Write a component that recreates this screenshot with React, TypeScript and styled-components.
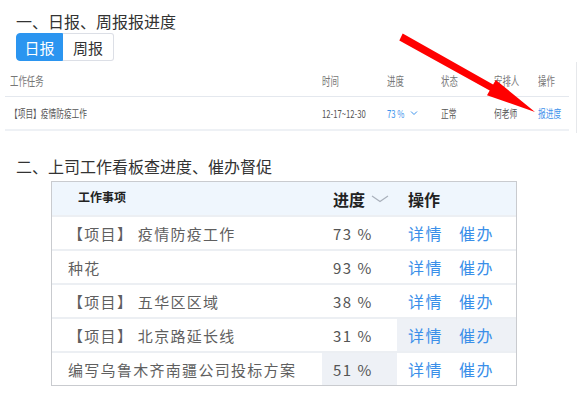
import React from "react";
import styled, { createGlobalStyle } from "styled-components";

const GlobalStyle = createGlobalStyle`
  html, body {
    margin: 0;
    padding: 0;
    background: #fff;
  }
  body {
    font-family: "Noto Sans CJK SC", "Noto Sans", sans-serif;
    color: #333;
  }
`;

const Page = styled.div`
  position: relative;
  width: 581px;
  height: 399px;
  padding-top: 10px;
  box-sizing: border-box;
  overflow: hidden;
`;

const Title = styled.h2<{ $top?: number }>`
  margin: ${(p) => p.$top ?? 0}px 0 0 16px;
  font-size: 16px;
  font-weight: 400;
  line-height: 22px;
  color: #333;
`;

const Tabs = styled.div`
  display: flex;
  margin: 1px 0 0 16px;
`;

const Tab = styled.div<{ $active?: boolean }>`
  height: 28px;
  box-sizing: border-box;
  padding: 0;
  display: flex;
  align-items: center;
  justify-content: center;
  white-space: nowrap;
  font-size: 15px;
  color: ${(p) => (p.$active ? "#fff" : "#333")};
  background: ${(p) => (p.$active ? "#2b95f0" : "#fff")};
  border: 1px solid ${(p) => (p.$active ? "#2b95f0" : "#dcdfe6")};
  border-left-width: ${(p) => (p.$active ? 1 : 0)}px;
  border-radius: ${(p) => (p.$active ? "4px 0 0 4px" : "0 3px 3px 0")};
  width: ${(p) => (p.$active ? 47 : 51)}px;
`;

// 日报表格
const Panel = styled.div`
  margin: 1px 0 0 0;
  padding: 3px 7px 2px 5px;
  width: 577px;
  box-sizing: border-box;
  border-right: 1px solid #e6e8eb;
`;

const ReportRow = styled.div<{ $head?: boolean }>`
  display: grid;
  grid-template-columns: 312px 65px 54px 53px 44px 37px;
  height: ${(p) => (p.$head ? 32 : 34)}px;
  align-items: center;
  border-bottom: ${(p) => (p.$head ? "1px solid #e4e8ee" : "2px solid #eef1f5")};
  box-sizing: border-box;
`;

const ReportCell = styled.div`
  padding-left: 5px;
  display: flex;
  align-items: center;
  white-space: nowrap;
  overflow: visible;
`;

const Squeeze = styled.span<{ $head?: boolean; $blue?: boolean }>`
  display: inline-block;
  font-size: ${(p) => (p.$head ? 12 : 11)}px;
  color: ${(p) => (p.$blue ? "#3d93ec" : p.$head ? "#777" : "#555")};
  transform: scaleX(0.7);
  transform-origin: left center;
  white-space: nowrap;
`;

const TinyChevron = styled.svg`
  margin-left: -2px;
`;

// 看板表格
const Board = styled.div`
  margin: 4px 0 0 51px;
  width: 466px;
  border: 1px solid #c9cbcf;
  box-sizing: border-box;
`;

const BoardRow = styled.div<{ $head?: boolean }>`
  display: grid;
  grid-template-columns: 270px 75px 119px;
  height: ${(p) => (p.$head ? 33 : 34)}px;
  background: ${(p) => (p.$head ? "#eff6fd" : "#fff")};
  border-top: ${(p) => (p.$head ? "none" : "2px solid #eceff3")};
  box-sizing: border-box;
`;

const HeadCell = styled.div<{ $pad: number; $small?: boolean }>`
  padding-left: ${(p) => p.$pad}px;
  display: flex;
  align-items: ${(p) => (p.$small ? "flex-start" : "center")};
  padding-top: ${(p) => (p.$small ? 6 : 0)}px;
  font-size: ${(p) => (p.$small ? 12 : 16)}px;
  font-weight: 700;
  color: #222;
  box-sizing: border-box;
  gap: 6px;
`;

const BoardCell = styled.div<{ $pad: number; $hl?: boolean }>`
  padding-left: ${(p) => p.$pad}px;
  display: flex;
  align-items: center;
  background: ${(p) => (p.$hl ? "#eef1f6" : "transparent")};
  white-space: nowrap;
  overflow: hidden;
`;

const TaskText = styled.span`
  font-size: 15px;
  letter-spacing: 1.3px;
  color: #5f5f5f;
`;

const Percent = styled.span`
  font-size: 15px;
  letter-spacing: 1.5px;
  color: #555;
`;

const Link = styled.span`
  font-size: 16px;
  letter-spacing: 1.5px;
  color: #3a8fe9;
  margin-right: 16px;
`;

const Arrow = styled.svg`
  position: absolute;
  left: 0;
  top: 0;
  pointer-events: none;
`;

interface BoardItem {
  name: string;
  progress: number;
  hlProgress?: boolean;
  hlAction?: boolean;
}

const boardItems: BoardItem[] = [
  { name: "【项目】 疫情防疫工作", progress: 73 },
  { name: "种花", progress: 93 },
  { name: "【项目】 五华区区域", progress: 38 },
  { name: "【项目】 北京路延长线", progress: 31, hlAction: true },
  { name: "编写乌鲁木齐南疆公司投标方案", progress: 51, hlProgress: true },
];

const App: React.FC = () => {
  return (
    <>
      <GlobalStyle />
      <Page>
        <Title>一、日报、周报报进度</Title>
        <Tabs>
          <Tab $active>日报</Tab>
          <Tab>周报</Tab>
        </Tabs>

        <Panel>
          <ReportRow $head>
            <ReportCell><Squeeze $head>工作任务</Squeeze></ReportCell>
            <ReportCell><Squeeze $head>时间</Squeeze></ReportCell>
            <ReportCell><Squeeze $head>进度</Squeeze></ReportCell>
            <ReportCell><Squeeze $head>状态</Squeeze></ReportCell>
            <ReportCell><Squeeze $head>安排人</Squeeze></ReportCell>
            <ReportCell><Squeeze $head>操作</Squeeze></ReportCell>
          </ReportRow>
          <ReportRow>
            <ReportCell><Squeeze>【项目】疫情防疫工作</Squeeze></ReportCell>
            <ReportCell><Squeeze>12-17~12-30</Squeeze></ReportCell>
            <ReportCell>
              <Squeeze $blue>73 %</Squeeze>
              <TinyChevron width="8" height="6" viewBox="0 0 8 6">
                <path d="M1 1.5 L4 4.5 L7 1.5" fill="none" stroke="#3d93ec" strokeWidth="1" />
              </TinyChevron>
            </ReportCell>
            <ReportCell><Squeeze>正常</Squeeze></ReportCell>
            <ReportCell><Squeeze>何老师</Squeeze></ReportCell>
            <ReportCell><Squeeze $blue>报进度</Squeeze></ReportCell>
          </ReportRow>
        </Panel>

        <Title $top={22}>二、上司工作看板查进度、催办督促</Title>

        <Board>
          <BoardRow $head>
            <HeadCell $pad={26} $small>工作事项</HeadCell>
            <HeadCell $pad={11}>
              进度
              <svg width="18" height="8" viewBox="0 0 18 8">
                <path d="M1 1 L9 6.5 L17 1" fill="none" stroke="#a9b0bb" strokeWidth="1.2" />
              </svg>
            </HeadCell>
            <HeadCell $pad={11}>操作</HeadCell>
          </BoardRow>
          {boardItems.map((item) => (
            <BoardRow key={item.name}>
              <BoardCell $pad={16}><TaskText>{item.name}</TaskText></BoardCell>
              <BoardCell $pad={11} $hl={item.hlProgress}><Percent>{item.progress} %</Percent></BoardCell>
              <BoardCell $pad={11} $hl={item.hlAction}>
                <Link>详情</Link>
                <Link>催办</Link>
              </BoardCell>
            </BoardRow>
          ))}
        </Board>

        <Arrow width="581" height="399" viewBox="0 0 581 399">
          <polygon
            points="399.3,40.5 402.7,33.5 493.1,84.5 495.8,80 535,112 487,95.2 489.7,90.6"
            fill="#ff0000"
          />
        </Arrow>
      </Page>
    </>
  );
};

export default App;
